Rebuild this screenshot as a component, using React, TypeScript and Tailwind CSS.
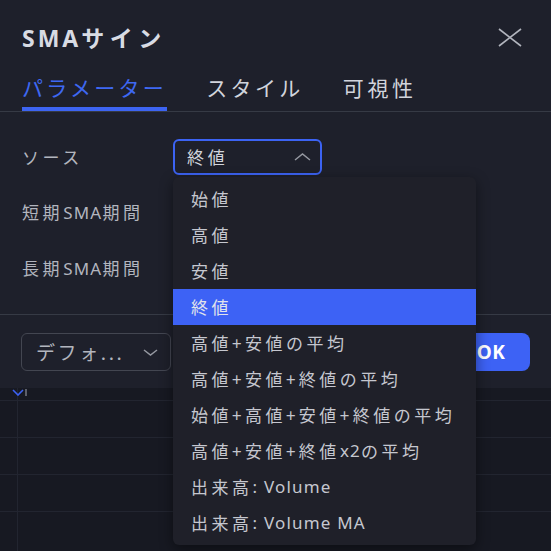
import { useState } from "react";

const SOURCES = [
  "始値",
  "高値",
  "安値",
  "終値",
  "高値+安値の平均",
  "高値+安値+終値の平均",
  "始値+高値+安値+終値の平均",
  "高値+安値+終値x2の平均",
  "出来高: Volume",
  "出来高: Volume MA",
];

// latin runs read wider than CJK in the screenshot, so give them their own font and spacing
function Mixed({ text }: { text: string }) {
  const parts = text.split(/([A-Za-z0-9:][A-Za-z0-9: ]*)/);
  return (
    <>
      {parts.map((p, i) =>
        /^[A-Za-z0-9:]/.test(p) ? (
          <span key={i} className="whitespace-pre font-['Noto_Sans',sans-serif] tracking-[1.2px]">
            {p}
          </span>
        ) : (
          <span key={i}>{p}</span>
        )
      )}
    </>
  );
}

function ChevronUp() {
  return (
    <svg width="17" height="8" viewBox="0 0 17 8" fill="none">
      <polyline points="1,7 8.5,1 16,7" stroke="#9598a1" strokeWidth="1.5" />
    </svg>
  );
}

function ChevronDown() {
  return (
    <svg width="15" height="7" viewBox="0 0 15 7" fill="none">
      <polyline points="1,1 7.5,6 14,1" stroke="#9598a1" strokeWidth="1.5" />
    </svg>
  );
}

export default function App() {
  const [source, setSource] = useState("終値");

  return (
    <div className="flex h-[551px] w-full flex-col overflow-hidden bg-[#171922] font-['Noto_Sans_CJK_JP','Noto_Sans',sans-serif]">
      {/* Dialog */}
      <div className="flex flex-col bg-[#1e202b]">
        {/* Header */}
        <div className="flex h-[74px] items-center justify-between pl-[22px] pr-[29px]">
          <h1 className="text-[23px] font-bold leading-[28px] tracking-[5.5px] text-[#d8dbe3]">
            <span className="font-['Noto_Sans',sans-serif] tracking-[3px]">SMA</span>サイン
          </h1>
          <button className="flex items-center">
            <svg width="24" height="19" viewBox="0 0 24 19" fill="none">
              <line x1="1" y1="1" x2="23" y2="18" stroke="#b2b5be" strokeWidth="1.6" />
              <line x1="23" y1="1" x2="1" y2="18" stroke="#b2b5be" strokeWidth="1.6" />
            </svg>
          </button>
        </div>

        {/* Tabs */}
        <div className="flex h-[38px] gap-[39px] border-b border-[#363a45] px-[22px]">
          <div className="relative text-[21px] leading-[27px] tracking-[3.3px] text-[#3e68f2]">
            パラメーター
            <div className="absolute bottom-0 left-0 right-0 h-[4px] bg-[#3d64f2]" />
          </div>
          <div className="text-[21px] leading-[27px] tracking-[3.4px] text-[#d1d4dc]">スタイル</div>
          <div className="text-[21px] leading-[27px] tracking-[3.6px] text-[#d1d4dc]">可視性</div>
        </div>

        {/* Body */}
        <div className="flex flex-col gap-[19.5px] border-b border-[#363a45] px-[22px] pb-[28px] pt-[27px]">
          <div className="flex h-[36px] items-center">
            <div className="w-[151px] text-[17px] tracking-[3.6px] text-[#b2b5be]">ソース</div>
            <div className="relative">
              <div className="flex h-[36px] w-[149px] items-center justify-between rounded-[6px] border-2 border-[#3c63f3] pl-[12px] pr-[9px]">
                <span className="text-[17px] tracking-[3.8px] text-[#d1d4dc]">{source}</span>
                <ChevronUp />
              </div>
              {/* Dropdown */}
              <div className="absolute left-0 top-[38px] z-10 w-[303px] rounded-[6px] bg-[#1f2029] py-[4px] shadow-[0_4px_14px_rgba(0,0,0,0.45)]">
                {SOURCES.map((s) => (
                  <div
                    key={s}
                    onClick={() => setSource(s)}
                    className={
                      s === source
                        ? "flex h-[36px] items-center bg-[#3d62f5] pl-[18px] text-[17px] tracking-[3.5px] text-[#e0e3eb]"
                        : "flex h-[36px] items-center pl-[18px] text-[17px] tracking-[3.5px] text-[#c5c7cf]"
                    }
                  >
                    <Mixed text={s} />
                  </div>
                ))}
              </div>
            </div>
          </div>
          <div className="flex h-[36px] items-center">
            <div className="w-[151px] text-[17px] tracking-[3.6px] text-[#b2b5be]">
              <Mixed text="短期SMA期間" />
            </div>
            <div className="h-[36px] w-[149px] rounded-[6px] border border-[#434651]" />
          </div>
          <div className="flex h-[36px] items-center">
            <div className="w-[151px] text-[17px] tracking-[3.6px] text-[#b2b5be]">
              <Mixed text="長期SMA期間" />
            </div>
            <div className="h-[36px] w-[149px] rounded-[6px] border border-[#434651]" />
          </div>
        </div>

        {/* Footer */}
        <div className="flex items-center justify-between px-[21px] pb-[17px] pt-[18px]">
          <div className="flex h-[38px] w-[150px] items-center justify-between rounded-[6px] border border-[#434651] pl-[14px] pr-[12px]">
            <span className="text-[19px] tracking-[2.6px] text-[#b2b5be]">デフォ...</span>
            <ChevronDown />
          </div>
          <div className="flex items-center gap-[12px]">
            <button className="h-[38px] w-[92px] rounded-[8px] border border-[#434651] text-[17px] text-[#d1d4dc]">
              キャンセル
            </button>
            <button className="h-[38px] w-[78px] rounded-[8px] bg-[#3d62f5] font-['Noto_Sans',sans-serif] text-[19px] font-bold tracking-[0.5px] text-white">
              OK
            </button>
          </div>
        </div>
      </div>

      {/* Chart behind the dialog */}
      <div className="relative flex-1 pt-[12px]">
        <div className="absolute bottom-0 left-[17px] top-0 w-px bg-[#222530]" />
        <svg className="absolute left-[12px] top-[1px]" width="12" height="7" viewBox="0 0 12 7" fill="none">
          <polyline points="1,1 6,6 11,1" stroke="#3d62f5" strokeWidth="1.6" />
        </svg>
        <div className="absolute left-[25px] top-[1px] h-[7px] w-[2px] bg-[#5d606b]" />
        <div className="h-[37px] border-t border-[#222530]" />
        <div className="h-[37px] border-t border-[#222530]" />
        <div className="h-[37px] border-t border-[#222530]" />
        <div className="h-[37px] border-t border-[#222530]" />
      </div>
    </div>
  );
}
